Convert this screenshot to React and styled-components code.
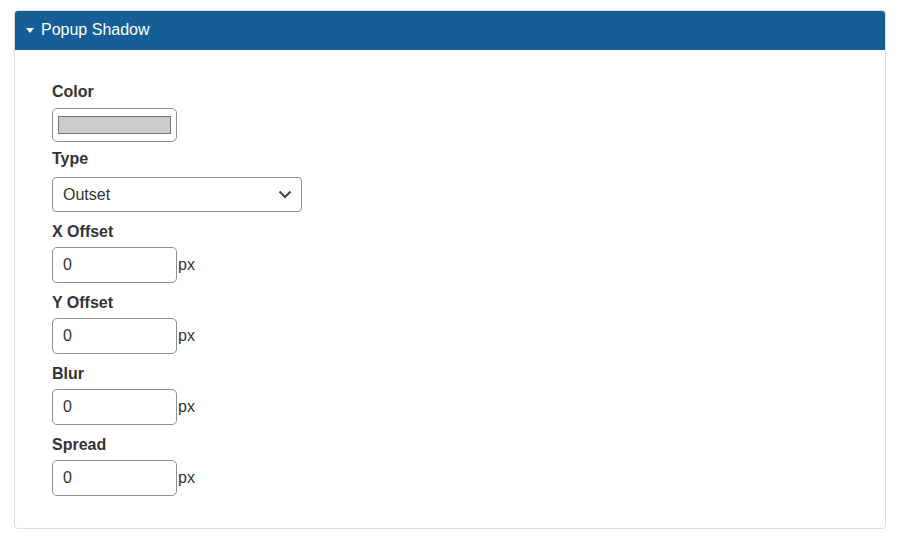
import React from "react";
import styled, { createGlobalStyle } from "styled-components";

const Global = createGlobalStyle`
  html, body { margin: 0; padding: 0; background: #fff; }
  body { font-family: "Liberation Sans", Arial, sans-serif; color: #333; }
  * { box-sizing: border-box; }
`;

const Page = styled.div`
  padding: 10px 14px;
`;

const Panel = styled.section`
  border: 1px solid #dcdcdc;
  border-radius: 4px;
  overflow: hidden;
`;

const Header = styled.div`
  height: 40px;
  background: #155e96;
  color: #fff;
  display: flex;
  align-items: center;
  padding-left: 12px;
  gap: 7px;
  font-size: 16px;
  margin: -1px -1px 0 -1px;
  border-radius: 4px 4px 0 0;
`;

const Caret = styled.span`
  width: 0;
  height: 0;
  border-left: 4px solid transparent;
  border-right: 4px solid transparent;
  border-top: 5px solid #fff;
  margin-top: 1px;
`;

const Body = styled.div`
  padding: 32px 37px 22px;
`;

const Field = styled.div`
  margin-bottom: ${(p) => p.$mb ?? 10}px;
`;

const Label = styled.div`
  font-weight: bold;
  font-size: 16px;
  line-height: 20px;
  color: #333;
  margin-bottom: ${(p) => p.$mb ?? 5}px;
`;

const ColorBox = styled.div`
  width: 125px;
  height: 34px;
  border: 1px solid #8f8f8f;
  border-radius: 5px;
  padding: 7px 5px;
`;

const Swatch = styled.div`
  height: 18px;
  background: #cccccc;
  border: 1px solid #777;
`;

const Select = styled.div`
  width: 250px;
  height: 35px;
  border: 1px solid #8f8f8f;
  border-radius: 4px;
  display: flex;
  align-items: center;
  justify-content: space-between;
  padding: 0 9px 0 10px;
  font-size: 16px;
  color: #333;
`;

const Row = styled.div`
  display: flex;
  align-items: center;
`;

const Input = styled.div`
  width: 125px;
  height: 36px;
  border: 1px solid #8f8f8f;
  border-radius: 5px;
  display: flex;
  align-items: center;
  padding-left: 10px;
  font-size: 16px;
  color: #333;
`;

const Unit = styled.span`
  font-size: 16px;
  color: #333;
  margin-left: 1px;
`;

const numbers = ["X Offset", "Y Offset", "Blur", "Spread"];

export default function App() {
  return (
    <>
      <Global />
      <Page>
        <Panel>
          <Header>
            <Caret />
            <span>Popup Shadow</span>
          </Header>
          <Body>
            <Field $mb={7}>
              <Label $mb={6}>Color</Label>
              <ColorBox>
                <Swatch />
              </ColorBox>
            </Field>
            <Field>
              <Label $mb={8}>Type</Label>
              <Select>
                <span>Outset</span>
                <svg width="14" height="9" viewBox="0 0 14 9">
                  <path d="M1.5 1.5 L7 7 L12.5 1.5" fill="none" stroke="#444" strokeWidth="2" />
                </svg>
              </Select>
            </Field>
            {numbers.map((n) => (
              <Field key={n}>
                <Label>{n}</Label>
                <Row>
                  <Input>0</Input>
                  <Unit>px</Unit>
                </Row>
              </Field>
            ))}
          </Body>
        </Panel>
      </Page>
    </>
  );
}
